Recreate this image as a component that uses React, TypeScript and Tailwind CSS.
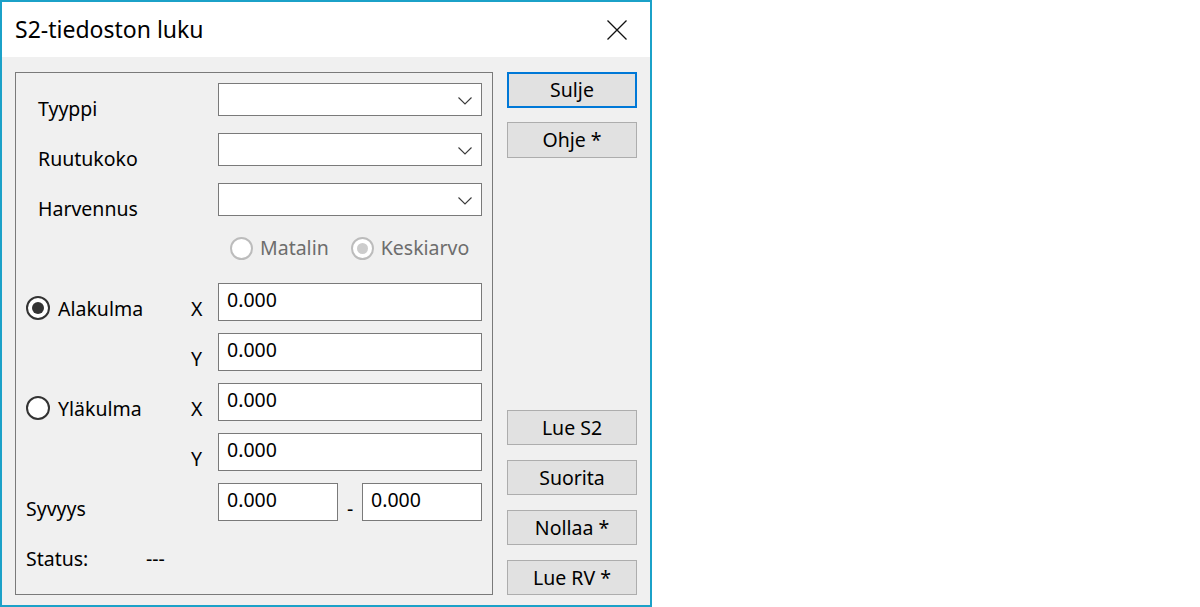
import React from "react";

const fontStack = { fontFamily: '"Noto Sans", "Open Sans", sans-serif' };

const Chevron = () => (
	<svg width="14" height="8" viewBox="0 0 14 8" fill="none">
		<path d="M0.5 0.5 L7 7 L13.5 0.5" stroke="#3a3a3a" strokeWidth="1.1" />
	</svg>
);

const Combo: React.FC = () => (
	<div className="w-[264px] h-[33px] bg-white border border-[#7a7a7a] flex items-center justify-end pr-[9px] pt-[2px]">
		<Chevron />
	</div>
);

const NumInput: React.FC<{ w?: string; value?: string }> = ({ w = "w-[264px]", value = "0.000" }) => (
	<div className={`${w} h-[38px] bg-white border border-[#7a7a7a] pl-[8px] pt-[6px] text-[19.5px] leading-[20px] text-black`}>
		{value}
	</div>
);

const Radio: React.FC<{ checked?: boolean; disabled?: boolean }> = ({ checked, disabled }) => (
	<div
		className={
			disabled
				? "w-[23px] h-[23px] rounded-full border-2 border-[#bcbcbc] bg-white flex items-center justify-center"
				: "w-[24px] h-[24px] rounded-full border-2 border-[#333333] bg-white flex items-center justify-center"
		}
	>
		{checked && (
			<div className={disabled ? "w-[11px] h-[11px] rounded-full bg-[#cccccc]" : "w-[12px] h-[12px] rounded-full bg-[#333333]"}></div>
		)}
	</div>
);

const Button: React.FC<{ label: string; focused?: boolean; h?: string }> = ({ label, focused, h = "h-[36px]" }) => (
	<div
		className={
			focused
				? `w-[130px] ${h} bg-[#e1e1e1] border-2 border-[#0078d7] flex items-center justify-center text-[19.5px] leading-[20px]`
				: `w-[130px] ${h} bg-[#e1e1e1] border border-[#adadad] flex items-center justify-center text-[19.5px] leading-[20px]`
		}
	>
		{label}
	</div>
);

export default function App() {
	return (
		<div className="w-[1200px] h-[607px] bg-white text-black" style={fontStack}>
			<div className="w-[652px] h-[607px] border-2 border-[#1ba1c8] flex flex-col bg-[#f0f0f0]">
				{/* TITLE BAR */}
				<div className="h-[55px] bg-white flex items-center justify-between pl-[13px] pr-[23px]">
					<span className="text-[23px] leading-[23px]">S2-tiedoston luku</span>
					<svg width="20" height="20" viewBox="0 0 20 20" fill="none">
						<path d="M0.5 0.5 L19.5 19.5 M19.5 0.5 L0.5 19.5" stroke="#111" strokeWidth="1.3" />
					</svg>
				</div>

				{/* BODY */}
				<div className="flex pl-[13px] pt-[15px] gap-[14px]">
					{/* GROUP BOX */}
					<div className="w-[478px] h-[523px] border border-[#7a7a7a] pt-[10px] text-[19.5px] leading-[20px]">
						{/* Combos */}
						{["Tyyppi", "Ruutukoko", "Harvennus"].map((label) => (
							<div key={label} className="h-[50px] flex items-start">
								<div className="w-[202px] pl-[22px] mt-[16px]">{label}</div>
								<Combo />
							</div>
						))}

						{/* Matalin / Keskiarvo */}
						<div className="h-[50px] flex items-start pl-[214px] text-[#6d6d6d]">
							<div className="flex items-center mt-[4px]">
								<Radio disabled />
								<span className="ml-[7px] -mt-[2px]">Matalin</span>
							</div>
							<div className="flex items-center mt-[4px] ml-[22px]">
								<Radio disabled checked />
								<span className="ml-[7px] -mt-[2px]">Keskiarvo</span>
							</div>
						</div>

						{/* Alakulma */}
						<div className="h-[50px] flex items-start">
							<div className="w-[175px] pl-[10px] flex items-center mt-[13px]">
								<Radio checked />
								<span className="ml-[8px] mt-[1px]">Alakulma</span>
							</div>
							<div className="w-[27px] mt-[16px]">X</div>
							<NumInput />
						</div>
						<div className="h-[50px] flex items-start">
							<div className="w-[175px]"></div>
							<div className="w-[27px] mt-[16px]">Y</div>
							<NumInput />
						</div>

						{/* Yläkulma */}
						<div className="h-[50px] flex items-start">
							<div className="w-[175px] pl-[10px] flex items-center mt-[13px]">
								<Radio />
								<span className="ml-[8px] mt-[1px]">Yläkulma</span>
							</div>
							<div className="w-[27px] mt-[16px]">X</div>
							<NumInput />
						</div>
						<div className="h-[50px] flex items-start">
							<div className="w-[175px]"></div>
							<div className="w-[27px] mt-[16px]">Y</div>
							<NumInput />
						</div>

						{/* Syvyys */}
						<div className="h-[50px] flex items-start">
							<div className="w-[202px] pl-[10px] mt-[16px]">Syvyys</div>
							<NumInput w="w-[120px]" />
							<div className="w-[24px] pl-[9px] mt-[16px]">-</div>
							<NumInput w="w-[120px]" />
						</div>

						{/* Status */}
						<div className="h-[50px] flex items-start">
							<div className="w-[130px] pl-[10px] mt-[16px]">Status:</div>
							<div className="mt-[16px]">---</div>
						</div>
					</div>

					{/* BUTTONS */}
					<div className="h-[523px] flex flex-col justify-between">
						<div className="flex flex-col gap-[14px]">
							<Button label="Sulje" focused />
							<Button label="Ohje *" />
						</div>
						<div className="flex flex-col gap-[15px]">
							<Button label="Lue S2" h="h-[35px]" />
							<Button label="Suorita" h="h-[35px]" />
							<Button label="Nollaa *" h="h-[35px]" />
							<Button label="Lue RV *" h="h-[35px]" />
						</div>
					</div>
				</div>
			</div>
		</div>
	);
}
